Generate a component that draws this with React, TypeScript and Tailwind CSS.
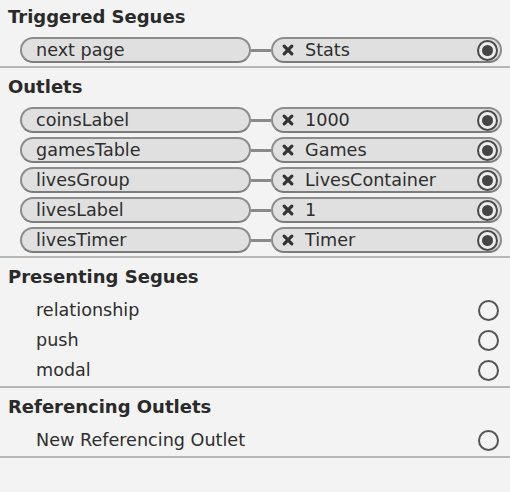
import React from 'react';

interface Connection {
  source: string;
  target: string;
}

const triggered: Connection[] = [{ source: 'next page', target: 'Stats' }];

const outlets: Connection[] = [
  { source: 'coinsLabel', target: '1000' },
  { source: 'gamesTable', target: 'Games' },
  { source: 'livesGroup', target: 'LivesContainer' },
  { source: 'livesLabel', target: '1' },
  { source: 'livesTimer', target: 'Timer' },
];

const presenting = ['relationship', 'push', 'modal'];
const referencing = ['New Referencing Outlet'];

function XMark() {
  return (
    <svg width="12" height="12" viewBox="0 0 12 12" className="shrink-0">
      <path d="M2.2 2.2 L9.8 9.8 M9.8 2.2 L2.2 9.8" stroke="#333" strokeWidth="3.2" strokeLinecap="round" />
    </svg>
  );
}

function FilledTarget() {
  return (
    <div className="w-[21px] h-[21px] rounded-full border-2 border-[#4a4a4a] bg-[#ececec] flex items-center justify-center shrink-0">
      <div className="w-[11px] h-[11px] rounded-full bg-[#444]" />
    </div>
  );
}

function EmptyTarget() {
  return <div className="w-[21px] h-[21px] rounded-full border-2 border-[#555] shrink-0" />;
}

function Heading({ title, first }: { title: string; first?: boolean }) {
  return (
    <div className={`${first ? 'pt-[6px]' : 'pt-[8px]'} pb-[7px] pl-2 text-[18px] leading-[22px] font-bold text-[#2a2a2a]`}>
      {title}
    </div>
  );
}

function ConnectionRow({ item }: { item: Connection }) {
  return (
    <div className="h-[30px] flex items-center pl-[20px] pr-[8px]">
      <div className="w-[231px] h-[26px] rounded-full border-2 border-[#8c8c8c] border-b-[#7c7c7c] bg-[#e0e0e0] flex items-center pl-[14px] text-[#2e2e2e]">
        {item.source}
      </div>
      <div className="w-[20px] h-[3px] bg-[#8a8a8a]" />
      <div className="flex-1 h-[26px] rounded-full border-2 border-[#8c8c8c] border-b-[#7c7c7c] bg-[#e0e0e0] flex items-center pl-[9px] pr-[2px] text-[#2e2e2e]">
        <XMark />
        <span className="ml-[11px] flex-1">{item.target}</span>
        <FilledTarget />
      </div>
    </div>
  );
}

function PlainRow({ label }: { label: string }) {
  return (
    <div className="h-[30px] flex items-center pl-[36px] pr-[11px] text-[#2e2e2e]">
      <span className="flex-1">{label}</span>
      <EmptyTarget />
    </div>
  );
}

function Separator() {
  return <div className="h-[2px] bg-[#b7b7b7]" />;
}

export default function App() {
  return (
    <div
      className="w-[510px] h-[492px] bg-[#f3f3f3] text-[17.6px] leading-[22px] overflow-hidden"
      style={{ fontFamily: '"DejaVu Sans", Verdana, sans-serif' }}
    >
      <div className="pb-[1px]">
        <Heading title="Triggered Segues" first />
        {triggered.map(t => (
          <ConnectionRow key={t.source} item={t} />
        ))}
      </div>
      <Separator />
      <div className="pb-[1px]">
        <Heading title="Outlets" />
        {outlets.map(o => (
          <ConnectionRow key={o.source} item={o} />
        ))}
      </div>
      <Separator />
      <div className="pb-[1px]">
        <Heading title="Presenting Segues" />
        {presenting.map(p => (
          <PlainRow key={p} label={p} />
        ))}
      </div>
      <Separator />
      <div className="pb-[1px]">
        <Heading title="Referencing Outlets" />
        {referencing.map(r => (
          <PlainRow key={r} label={r} />
        ))}
      </div>
      <Separator />
    </div>
  );
}
